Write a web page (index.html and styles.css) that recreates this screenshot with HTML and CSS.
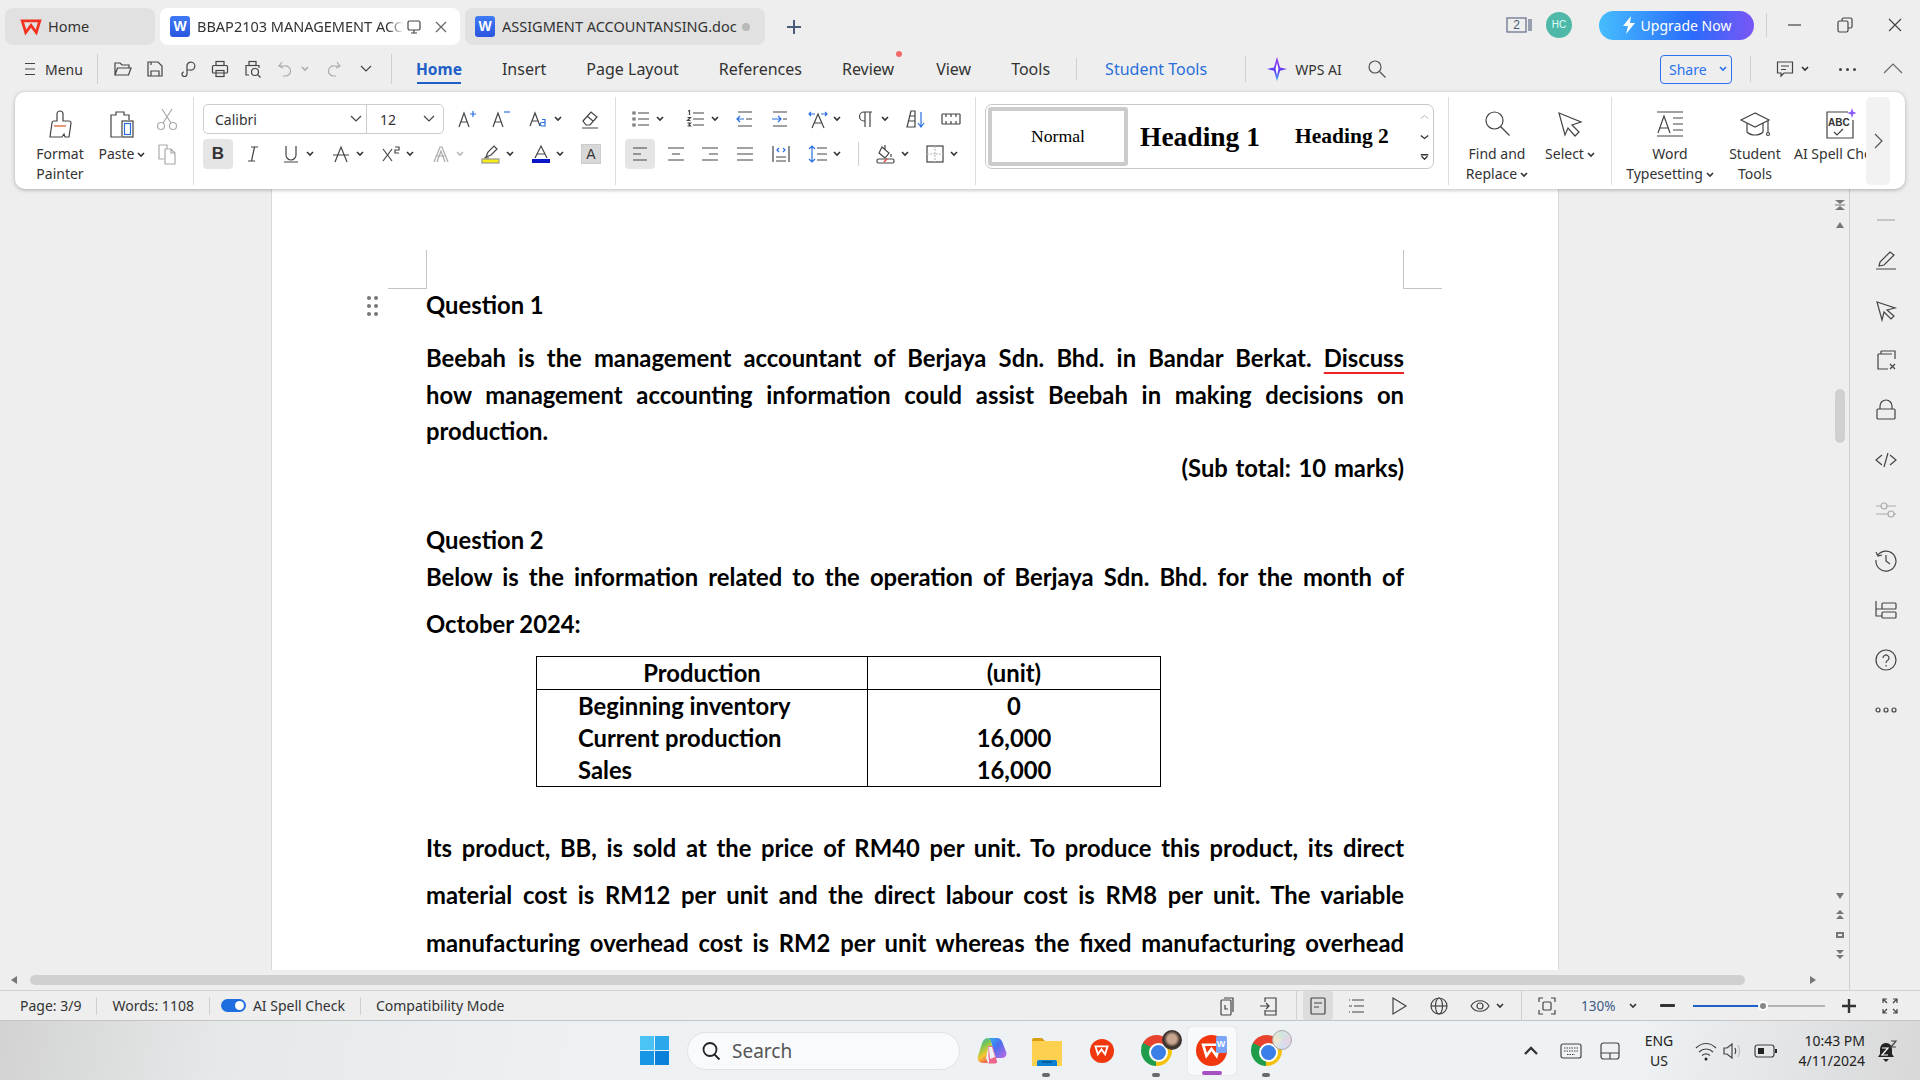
FILE: index.html
```html
<!DOCTYPE html>
<html lang="en">
<head>
<meta charset="utf-8">
<title>WPS Writer</title>
<link rel="stylesheet" href="styles.css">
</head>
<body>
<svg class="defs" aria-hidden="true"><symbol id="car" viewBox="0 0 8 6"><path d="M1 1l3 3 3-3" fill="none" stroke="currentColor" stroke-width="1.6"/></symbol><symbol id="wps" viewBox="0 0 20 20"><path d="M2 4.500h16L14.800 15 10 8.500 5.200 15z" fill="none" stroke="currentColor" stroke-width="2.500" stroke-linejoin="miter"/></symbol></svg>

<header class="tabbar">
  <div class="tab tab-home"><svg class="wlogo" viewBox="0 0 20 20"><use href="#wps"/></svg><span>Home</span></div>
  <div class="tab tab-active"><span class="wordicon">W</span><span class="tabname fade">BBAP2103 MANAGEMENT ACCOUNTING</span>
    <svg class="i16" viewBox="0 0 16 16"><rect x="2" y="2" width="12" height="9" rx="1.500"/><path d="M8 11v3M5 14h6"/></svg>
    <svg class="i16 close" viewBox="0 0 16 16"><path d="M3 3l10 10M13 3L3 13"/></svg></div>
  <div class="tab tab-other"><span class="wordicon">W</span><span class="tabname">ASSIGMENT ACCOUNTANSING.doc</span><span class="tabdot"></span></div>
  <div class="cell w48"><svg class="i20 plus" viewBox="0 0 20 20"><path d="M10 3v14M3 10h14"/></svg></div>
  <div class="top-right">
    <svg class="count" viewBox="0 0 26 16"><rect x="1" y="1" width="19" height="14"/><path d="M23 2v12M25 2v12"/><text x="10.500" y="12" class="count-n">2</text></svg>
    <span class="avatar">HC</span>
    <span class="upgrade"><svg class="bolt" viewBox="0 0 14 18"><path d="M9 0L1 10h5l-2 8 9-11H8z"/></svg>Upgrade Now</span>
    <span class="vsep sep-up"></span>
    <div class="cell w50"><svg class="i20" viewBox="0 0 20 20"><path d="M3 10h13"/></svg></div>
    <div class="cell w50"><svg class="i20" viewBox="0 0 20 20"><rect x="3" y="6" width="10" height="11" rx="1.500"/><path d="M7 6V4.500A1.500 1.500 0 0 1 8.500 3h7A1.500 1.500 0 0 1 17 4.500v7a1.500 1.500 0 0 1-1.500 1.500H13"/></svg></div>
    <div class="cell w50"><svg class="i20" viewBox="0 0 20 20"><path d="M4 4l12 12M16 4L4 16"/></svg></div>
  </div>
</header>

<nav class="menubar">
  <div class="cell w30"><svg class="i16" viewBox="0 0 16 16"><path d="M3 2.500h10M3 8h10M3 13.500h10"/></svg></div>
  <span class="menu-label">Menu</span>
  <span class="vsep sep-menu"></span>
  <div class="cell w32"><svg class="i20" viewBox="0 0 20 20"><path d="M2 16V4h5l2 2h7v3M2 16l2.500-7H18l-2.500 7z"/></svg></div>
  <div class="cell w32"><svg class="i20" viewBox="0 0 20 20"><path d="M3 3h10l4 4v10H3zM6 17v-5h8v5M6 3v3"/></svg></div>
  <div class="cell w33"><svg class="i20" viewBox="0 0 20 20"><path d="M9 11V6a4 4 0 1 1 3 5H9zM9 11v4a2.500 2.500 0 0 1-5 0 2 2 0 0 1 2-2"/></svg></div>
  <div class="cell w32"><svg class="i20" viewBox="0 0 20 20"><rect x="6" y="2.500" width="8" height="4"/><rect x="2.500" y="6.500" width="15" height="7.500" rx="1"/><rect x="6" y="11.500" width="8" height="6"/></svg></div>
  <div class="cell w33"><svg class="i20" viewBox="0 0 20 20"><rect x="6" y="2.500" width="7" height="4"/><path d="M6 16H3V6.500h13V9"/><circle cx="12" cy="13" r="3.500"/><path d="M15 16l2.500 2.500"/></svg></div>
  <div class="cell w32"><svg class="i20 dim" viewBox="0 0 20 20"><path d="M7 3L4 7l4 2M4 7h6a5 5 0 0 1 1 10H8"/></svg></div>
  <div class="cell w8"><svg class="car dimc"><use href="#car"/></svg></div>
  <div class="cell w50"><svg class="i20 dim" viewBox="0 0 20 20"><path d="M13 3l3 4-4 2M16 7h-6a5 5 0 0 0-1 10h3"/></svg></div>
  <div class="cell w14"><svg class="i12" viewBox="0 0 12 8"><path d="M1 1l5 5 5-5"/></svg></div>
  <span class="vsep sep-nav"></span>
  <div class="nav">
    <span class="nav-item nav-active">Home</span>
    <span class="nav-item">Insert</span>
    <span class="nav-item">Page Layout</span>
    <span class="nav-item">References</span>
    <span class="nav-item review">Review<i class="dot"></i></span>
    <span class="nav-item">View</span>
    <span class="nav-item">Tools</span>
    <span class="vsep"></span>
    <span class="nav-item nav-student">Student Tools</span>
    <span class="vsep tall"></span>
  </div>
  <svg class="ai" viewBox="0 0 22 32" preserveAspectRatio="none"><defs><linearGradient id="aig" x1="0" y1="0" x2="0" y2="1"><stop offset="0" stop-color="#a236f2"/><stop offset=".6" stop-color="#5a3cf0"/><stop offset="1" stop-color="#39b3f5"/></linearGradient></defs><path d="M11 1l3 13 7 2-7 2-3 13-3-13-7-2 7-2z" fill="url(#aig)"/><path d="M11 8l1.500 8-1.500 8-1.500-8z" fill="#fff"/></svg>
  <span class="ai-label">WPS AI</span>
  <svg class="i20 search" viewBox="0 0 20 20"><circle cx="8" cy="8" r="6"/><path d="M12.500 12.500l6 6"/></svg>
  <div class="menu-right">
    <span class="share">Share<svg class="car blue"><use href="#car"/></svg></span>
    <span class="vsep sep-share"></span>
    <svg class="i20" viewBox="0 0 20 20"><path d="M2.500 3h15v11H9l-3 3v-3H2.500zM6 7h8M6 10.500h5"/></svg>
    <svg class="car car-comment"><use href="#car"/></svg>
    <span class="dots"><i></i><i></i><i></i></span>
    <svg class="i20 collapse" viewBox="0 0 20 20"><path d="M1 14l9-9 9 9"/></svg>
  </div>
</nav>

<section class="ribbon">
  <div class="group g1">
    <div class="big w70">
      <div class="big-icon"><svg class="i32" viewBox="0 0 32 32"><path d="M13 13V6a3 3 0 0 1 6 0v7h6a2 2 0 0 1 2 2l-2 14H21l-1-3-2 3H6l2-14a2 2 0 0 1 2-2z"/><path d="M10 18h12" class="org"/></svg></div>
      <div class="label">Format<br>Painter</div>
    </div>
    <div class="big w50 paste">
      <div class="big-icon"><svg class="i32" viewBox="0 0 32 32"><path d="M15 29H5V7h5V4h8v3h5v5"/><rect x="16" y="13" width="11" height="16"/><rect x="18.500" y="15.500" width="6" height="11" class="bl"/></svg></div>
      <div class="label">Paste<svg class="car inl"><use href="#car"/></svg></div>
    </div>
    <div class="col-small">
      <svg class="i24 dim" viewBox="0 0 24 24"><circle cx="6" cy="19" r="3.500"/><circle cx="18" cy="19" r="3.500"/><path d="M8 16L17 2M16 16L7 2"/></svg>
      <svg class="i24 dim" viewBox="0 0 24 24"><path d="M4 3h8v4M4 3v14h5M10 7h6l4 4v11H10zM16 7v4h4"/></svg>
    </div>
  </div>

  <div class="group g2">
    <div class="row">
      <div class="combo"><span class="combo-font">Calibri<svg class="i12" viewBox="0 0 12 8"><path d="M1 1l5 5 5-5"/></svg></span><span class="combo-size">12<svg class="i12" viewBox="0 0 12 8"><path d="M1 1l5 5 5-5"/></svg></span></div>
      <div class="tool w34 ml13"><svg class="i20" viewBox="0 0 20 20"><path d="M2 18L7 4l5 14M4 13h6"/><path class="bl" d="M13 5h6M16 2v6"/></svg></div>
      <div class="tool w38"><svg class="i20" viewBox="0 0 20 20"><path d="M2 18L7 4l5 14M4 13h6"/><path class="bl" d="M13 3h6"/></svg></div>
      <div class="tool w51"><svg class="i20" viewBox="0 0 20 20"><path d="M1 17L6 4l5 13M3 12h6"/><path class="bl" d="M13 10.500h3v6.500h-3a1.700 1.700 0 0 1 0-3.500h3"/></svg><svg class="car"><use href="#car"/></svg></div>
      <div class="tool"><svg class="i20" viewBox="0 0 20 20"><path d="M3 12l8-9 6 5-7 8H6zM7 7l6 5M2 19h16"/></svg></div>
    </div>
    <div class="row row2">
      <div class="box mr10 bold-b">B</div>
      <div class="tool w38"><svg class="i20" viewBox="0 0 20 20"><path d="M8 3h7M5 17h7M11.500 3L8.500 17"/></svg></div>
      <div class="tool w50"><svg class="i20" viewBox="0 0 20 20"><path d="M5 2v9a5 5 0 0 0 10 0V2M3 18h14"/></svg><svg class="car"><use href="#car"/></svg></div>
      <div class="tool w50"><svg class="i20" viewBox="0 0 20 20"><path d="M4 18L10 3l6 15M2 11h16"/></svg><svg class="car"><use href="#car"/></svg></div>
      <div class="tool w50"><svg class="i20" viewBox="0 0 20 20"><path d="M2 5l9 12M11 5L2 17M14 3h4v3h-4v3h4"/></svg><svg class="car"><use href="#car"/></svg></div>
      <div class="tool w50"><svg class="i20 dim" viewBox="0 0 20 20"><path d="M3 18L9 3h2l6 15M6 12h8M6 18L10 7l4 11"/></svg><svg class="car dimc"><use href="#car"/></svg></div>
      <div class="tool w50"><svg class="i20" viewBox="0 0 20 20"><path d="M5 13l2-5 6-6 3 3-6 6zM3 14h5"/><rect class="yl" x="1" y="15" width="17" height="4"/></svg><svg class="car"><use href="#car"/></svg></div>
      <div class="tool w50"><svg class="i20" viewBox="0 0 20 20"><path d="M4 14L10 2l6 12M6 10h8"/><rect class="bf" x="1" y="15" width="18" height="4"/></svg><svg class="car"><use href="#car"/></svg></div>
      <div class="charbox">A</div>
    </div>
  </div>

  <div class="group g3">
    <div class="row row-p1">
      <div class="tool w55"><svg class="i20" viewBox="0 0 20 20"><path d="M7 4h11M7 10h11M7 16h11"/><path class="th" d="M2 3h2v2H2zM2 9h2v2H2zM2 15h2v2H2z"/></svg><svg class="car"><use href="#car"/></svg></div>
      <div class="tool w49"><svg class="i20" viewBox="0 0 20 20"><path d="M7 4h11M7 10h11M7 16h11M2 2l1.500-.5V6M1.500 8.500h3l-3 3h3M1.500 14h3l-1.500 1.500 1.500 1.500h-3"/></svg><svg class="car"><use href="#car"/></svg></div>
      <div class="tool w35"><svg class="i20" viewBox="0 0 20 20"><path d="M3 3h14M3 17h14M11 10h6"/><path class="bl" d="M2 10h7M5 7l-3 3 3 3"/></svg></div>
      <div class="tool w38"><svg class="i20" viewBox="0 0 20 20"><path d="M3 3h14M3 17h14M13 10h4"/><path class="bl" d="M2 10h9M8 7l3 3-3 3"/></svg></div>
      <div class="tool w48"><svg class="i20" viewBox="0 0 20 20"><path d="M4 19L10 5l6 14M6 14h8"/><path class="bl" d="M3 3l-2 2 2 2M1 5h6M17 3l2 2-2 2M19 5h-6"/></svg><svg class="car"><use href="#car"/></svg></div>
      <div class="tool w50"><svg class="i20" viewBox="0 0 20 20"><path d="M9 18V3M14 18V3M16 3H8a4.500 4.500 0 0 0 0 9h1"/></svg><svg class="car"><use href="#car"/></svg></div>
      <div class="tool w35"><svg class="i20" viewBox="0 0 20 20"><path d="M1 18L5 2h4v16zM3 7h6M2 12h7"/><path class="bl" d="M15 3v15M12 14l3 4 3-4"/></svg></div>
      <div class="tool"><svg class="i20" viewBox="0 0 20 20"><path d="M1 5v10M19 5v10M1 5h18M1 15h18M5 5v3M10 5v3M15 5v3M5 15v-3M10 15v-3M15 15v-3"/></svg></div>
    </div>
    <div class="row row2">
      <div class="box mr11"><svg class="i20" viewBox="0 0 20 20"><path d="M3 4h14M3 10h8M3 16h14"/></svg></div>
      <div class="tool w34"><svg class="i20" viewBox="0 0 20 20"><path d="M2 4h16M6 10h8M2 16h16"/></svg></div>
      <div class="tool w35"><svg class="i20" viewBox="0 0 20 20"><path d="M2 4h16M9 10h9M2 16h16"/></svg></div>
      <div class="tool w36"><svg class="i20" viewBox="0 0 20 20"><path d="M2 4h16M2 10h16M2 16h16"/></svg></div>
      <div class="tool w37"><svg class="i20" viewBox="0 0 20 20"><path d="M2 2v16M18 2v16M5 13h10M5 17h10"/><path class="bl" d="M8 4L6 6l2 2M12 4l2 2-2 2"/></svg></div>
      <div class="tool w50"><svg class="i20" viewBox="0 0 20 20"><path d="M9 4h10M9 10h10M9 16h10"/><path class="bl" d="M4 2v16M1 5l3-3 3 3M1 15l3 3 3-3"/></svg><svg class="car"><use href="#car"/></svg></div>
      <span class="vsep ribbon-sep"></span>
      <div class="tool w49"><svg class="i20" viewBox="0 0 20 20"><path d="M6 3l7 6-4 5-6-5zM9 1v4M15 10v3"/><rect x="1" y="15" width="17" height="4" rx="1.500"/><path class="rd" d="M8 18l3-3"/></svg><svg class="car"><use href="#car"/></svg></div>
      <div class="tool"><svg class="i20" viewBox="0 0 20 20"><rect x="2" y="2" width="16" height="16"/><path class="dsh" d="M10 2v16M2 10h16"/></svg><svg class="car"><use href="#car"/></svg></div>
    </div>
  </div>

  <div class="group g4">
    <div class="styles">
      <span class="style-normal">Normal</span>
      <span class="style-h1">Heading 1</span>
      <span class="style-h2">Heading 2</span>
      <div class="style-arrows">
        <svg class="i9 dim" viewBox="0 0 12 8"><path d="M1 6l5-4 5 4"/></svg>
        <svg class="i9 dark" viewBox="0 0 12 8"><path d="M1 2l5 4 5-4"/></svg>
        <svg class="i9 dark" viewBox="0 0 12 8"><path d="M1 1h10M2 3l4 4 4-4"/></svg>
      </div>
    </div>
  </div>

  <div class="group g5">
    <div class="big w96">
      <div class="big-icon"><svg class="i32" viewBox="0 0 32 32"><circle cx="13.500" cy="12.500" r="8.500"/><path d="M19.500 18.500l9 9"/></svg></div>
      <div class="label">Find and<br>Replace<svg class="car inl"><use href="#car"/></svg></div>
    </div>
    <div class="big w50">
      <div class="big-icon"><svg class="i32" viewBox="0 0 32 32"><path d="M5 5l22 9-9 3 7 7-4 4-7-8-3 7z"/></svg></div>
      <div class="label">Select<svg class="car inl"><use href="#car"/></svg></div>
    </div>
  </div>

  <div class="group g6">
    <div class="big w116">
      <div class="big-icon"><svg class="i32" viewBox="0 0 32 32"><path d="M3 4h26M3 28h26M4 25l6-17 6 17M6 20h8M19 10h10M19 16h10M19 22h10"/></svg></div>
      <div class="label">Word<br>Typesetting<svg class="car inl"><use href="#car"/></svg></div>
    </div>
    <div class="big w54">
      <div class="big-icon"><svg class="i32" viewBox="0 0 32 32"><path d="M16 5L2 12l14 7 14-7zM8 15v9c4 4 12 4 16 0v-9M29 13v11"/><circle cx="29" cy="26" r="1.500"/></svg></div>
      <div class="label">Student<br>Tools</div>
    </div>
    <div class="big big-ai">
      <div class="big-icon"><svg class="i32" viewBox="0 0 32 32"><path d="M24 4H3v26h26V12"/><path d="M10 24l3 3 6-6"/><text x="4" y="18" class="abc">ABC</text><path class="star" d="M28 0l1.200 3.800L33 5l-3.800 1.200L28 10l-1.200-3.800L23 5l3.800-1.200z"/></svg></div>
      <div class="label nowrap">AI Spell Check</div>
    </div>
  </div>
  <div class="ribbon-next"><svg class="i16" viewBox="0 0 16 16"><path d="M5 1l7 7-7 7"/></svg></div>
</section>

<main class="workspace">
  <div class="workspace-left">
    <div class="doc-row">
      <div class="doc-area">
        <article class="page">
          <span class="corner corner-l"></span>
          <span class="corner corner-r"></span>
          <span class="grip"><i></i><i></i><i></i><i></i><i></i><i></i></span>
          <p class="q">Question 1</p>
          <div class="para">
            <span class="jl">Beebah is the management accountant of Berjaya Sdn. Bhd. in Bandar Berkat. <u>Discuss</u></span>
            <span class="jl">how management accounting information could assist Beebah in making decisions on</span>
            <span class="ll">production.</span>
            <span class="rl">(Sub total: 10 marks)</span>
          </div>
          <div class="para para-q2">
            <span class="ll">Question 2</span>
            <span class="jl">Below is the information related to the operation of Berjaya Sdn. Bhd. for the month of</span>
            <span class="ll tall-line">October 2024:</span>
          </div>
          <table class="data">
            <thead><tr><th>Production</th><th>(unit)</th></tr></thead>
            <tbody>
              <tr><td class="name">Beginning inventory</td><td>0</td></tr>
              <tr><td class="name">Current production</td><td>16,000</td></tr>
              <tr><td class="name">Sales</td><td>16,000</td></tr>
            </tbody>
          </table>
          <div class="para para-wide">
            <span class="jl">Its product, BB, is sold at the price of RM40 per unit. To produce this product, its direct</span>
            <span class="jl">material cost is RM12 per unit and the direct labour cost is RM8 per unit. The variable</span>
            <span class="jl">manufacturing overhead cost is RM2 per unit whereas the fixed manufacturing overhead</span>
          </div>
        </article>
      </div>
      <div class="vscroll">
        <svg class="sc" viewBox="0 0 10 10"><path d="M0 0h10L5 4zM0 10h10L5 6z"/><path d="M0 4.500h10v1H0z"/></svg>
        <svg class="sc sc-up" viewBox="0 0 10 10"><path d="M5 2l4 6H1z"/></svg>
        <div class="v-thumb"></div>
        <div class="v-bottom">
          <svg class="sc" viewBox="0 0 10 10"><path d="M5 8L1 2h8z"/></svg>
          <svg class="sc" viewBox="0 0 10 10"><path d="M5 0l4 4H1zM5 5l4 4H1z"/></svg>
          <svg class="sc" viewBox="0 0 10 10"><path d="M1 2h8v6H1zM3 4v2h4V4z" fill-rule="evenodd"/></svg>
          <svg class="sc" viewBox="0 0 10 10"><path d="M5 5L1 1h8zM5 10L1 6h8z"/></svg>
        </div>
      </div>
    </div>
    <div class="hscroll">
      <svg class="sc" viewBox="0 0 10 10"><path d="M2 5l6-4v8z"/></svg>
      <div class="h-thumb"></div>
      <svg class="sc" viewBox="0 0 10 10"><path d="M8 5L2 1v8z"/></svg>
    </div>
  </div>
  <aside class="sidepanel">
    <svg class="i24 dim first" viewBox="0 0 24 24"><path d="M3 12h18"/></svg>
    <svg class="i24" viewBox="0 0 24 24"><path d="M5 18l1-4L16 4l4 3-10 10zM2 21h20"/></svg>
    <svg class="i24" viewBox="0 0 24 24"><path d="M3 4l18 6-8 2 7 6-3 3-7-7-2 8z"/></svg>
    <svg class="i24" viewBox="0 0 24 24"><path d="M7 3h14v8M4 6h14M4 6v15h10M7 3v3"/><path d="M16 16l5 5M21 16l-5 5"/></svg>
    <svg class="i24" viewBox="0 0 24 24"><rect x="3" y="11" width="18" height="10" rx="1"/><path d="M6 11V8a6 6 0 0 1 12 0v3"/></svg>
    <svg class="i24" viewBox="0 0 24 24"><path d="M8 7l-6 5 6 5M16 7l6 5-6 5M14 5l-4 14"/></svg>
    <svg class="i24 dim" viewBox="0 0 24 24"><path d="M2 8h5M13 8h9M2 16h12M20 16h2"/><circle cx="10" cy="8" r="3"/><circle cx="17" cy="16" r="3"/></svg>
    <svg class="i24" viewBox="0 0 24 24"><path d="M4 7a10 10 0 1 1-2 5M2 4l2 4 4-1M12 7v6l4 3"/></svg>
    <svg class="i24" viewBox="0 0 24 24"><path d="M2 3v15h6M2 11h6"/><rect x="8" y="5" width="14" height="6" rx="1"/><rect x="8" y="14" width="14" height="6" rx="1"/></svg>
    <svg class="i24" viewBox="0 0 24 24"><circle cx="12" cy="12" r="10"/><path d="M9 10a3 3 0 1 1 4.500 2.600c-1 .6-1.500 1-1.500 2.400M12 17v1.500"/></svg>
    <svg class="i24" viewBox="0 0 24 24"><circle cx="4" cy="12" r="2"/><circle cx="12" cy="12" r="2"/><circle cx="20" cy="12" r="2"/></svg>
  </aside>
</main>

<footer class="statusbar">
  <span class="st">Page: 3/9</span><span class="vsep st-sep"></span>
  <span class="st">Words: 1108</span><span class="vsep st-sep"></span>
  <span class="toggle"></span>
  <span class="st">AI Spell Check</span><span class="vsep st-sep"></span>
  <span class="st">Compatibility Mode</span>
  <div class="status-right">
    <div class="cell w42"><svg class="i20" viewBox="0 0 20 20"><path d="M7 2h9v14"/><rect x="4" y="4" width="10" height="15" rx="1"/><path d="M8 9v4h3"/></svg></div>
    <div class="cell w42"><svg class="i20" viewBox="0 0 20 20"><path d="M6 6V2h11v17H6v-5M6 15h11M1 10h9M7 7l3 3-3 3"/></svg></div>
    <div class="cell w13"><span class="vsep"></span></div>
    <div class="cell w30 st-active"><svg class="i20" viewBox="0 0 20 20"><rect x="3" y="2" width="14" height="16" rx="1"/><path d="M6 7h8M6 11h5"/></svg></div>
    <div class="cell w48"><svg class="i20" viewBox="0 0 20 20"><path d="M5 4h12M7 10h10M5 16h12M2 4h1M2 10h3M2 16h1"/></svg></div>
    <div class="cell w36"><svg class="i20" viewBox="0 0 20 20"><path d="M4 2l13 8-13 8z"/></svg></div>
    <div class="cell w44"><svg class="i20" viewBox="0 0 20 20"><circle cx="10" cy="10" r="8"/><ellipse cx="10" cy="10" rx="3.500" ry="8"/><path d="M2 10h16"/></svg></div>
    <div class="cell w52"><svg class="i20" viewBox="0 0 20 20"><path d="M1 10c4-7 14-7 18 0-4 7-14 7-18 0z"/><circle cx="10" cy="10" r="3"/></svg><svg class="car car-eye"><use href="#car"/></svg></div>
    <div class="cell w16"><span class="vsep"></span></div>
    <div class="cell w36"><svg class="i20" viewBox="0 0 20 20"><path d="M2 6V2h4M14 2h4v4M18 14v4h-4M6 18H2v-4"/><rect x="6" y="6" width="8" height="8" rx="1"/></svg></div>
    <span class="zoom-val">130%</span>
    <div class="cell w32"><svg class="car"><use href="#car"/></svg></div>
    <div class="cell w36"><span class="minus"></span></div>
    <div class="slider"><span class="slider-fill"></span><span class="slider-knob"></span></div>
    <div class="cell w48"><svg class="i16 thick" viewBox="0 0 16 16"><path d="M8 1v14M1 8h14"/></svg></div>
    <div class="cell w34"><svg class="i20" viewBox="0 0 20 20"><path d="M7 3H3v4M13 3h4v4M17 13v4h-4M7 17H3v-4M3 3l4 4M17 3l-4 4M17 17l-4-4M3 17l4-4" /></svg></div>
  </div>
</footer>

<footer class="taskbar">
  <div class="win"><i></i><i></i><i></i><i></i></div>
  <div class="searchbox"><svg class="i20 s-ic" viewBox="0 0 20 20"><circle cx="9" cy="8.500" r="6.500"/><path d="M13.500 13.500l5 5"/></svg><span>Search</span></div>
  <div class="tasks">
    <div class="task"><svg class="t30" viewBox="0 0 30 30"><defs><linearGradient id="cp1" x1="0" y1="0" x2="1" y2="1"><stop offset="0" stop-color="#2fb4ea"/><stop offset=".45" stop-color="#4a6ff0"/><stop offset="1" stop-color="#c46ae0"/></linearGradient><linearGradient id="cp2" x1="0" y1="0" x2=".4" y2="1"><stop offset="0" stop-color="#28a8e0"/><stop offset=".4" stop-color="#7cc850"/><stop offset=".75" stop-color="#f7c52f"/><stop offset="1" stop-color="#f07050"/></linearGradient></defs><path d="M11 2h9c3 0 4.500 2 5.500 4.500l3.500 9c1.500 4-1 6.500-4.500 6.500H19l-3.500-11C14.500 8 14 4 11 2z" fill="url(#cp1)"/><path d="M11 2c3 1 3.500 5 4 8h-3.500L9 22 11 27H6c-4 0-6-3-5-7L4.500 9C5.500 5 7.500 2 11 2z" fill="url(#cp2)"/><path d="M11.500 10h4l3.500 12c.8 3 2.500 5-1 5.500H11c2-1 1-3 .5-6z" fill="#f0638a"/><path d="M12 11h3l3 10-5 2z" fill="#eef2f6"/></svg></div>
    <div class="task"><svg class="t30" viewBox="0 0 30 30"><path d="M0 4a2 2 0 0 1 2-2h8l3 3v5H0z" fill="#d99e10"/><rect y="5" width="30" height="25" fill="#fdd04f"/><path d="M5 26a2 2 0 0 1 2-2h16a2 2 0 0 1 2 2v4H5z" fill="#0a80d4"/><path d="M10 26h10" stroke="#064f8a" stroke-width="1.500"/></svg><b class="pip"></b></div>
    <div class="task"><span class="wpsdot small"><svg viewBox="0 0 20 20"><use href="#wps"/></svg></span></div>
    <div class="task"><span class="chrome"></span><span class="badge-photo"></span><b class="pip"></b></div>
    <div class="task"><div class="tile"><span class="wpsdot"><svg viewBox="0 0 20 20"><use href="#wps"/></svg></span><span class="wbadge">W</span><b class="pip-long"></b></div></div>
    <div class="task"><span class="chrome"></span><span class="badge-opal"></span><b class="pip"></b></div>
  </div>
  <div class="tray">
    <div class="cell w40"><svg class="i16 thick" viewBox="0 0 16 16"><path d="M2 11l6-6 6 6"/></svg></div>
    <div class="cell w40"><svg class="i24" viewBox="0 0 24 24"><rect x="2" y="5" width="20" height="14" rx="2"/><path class="dsh2" d="M5 9h14M5 12h14M8 15.500h8"/></svg></div>
    <div class="cell w38"><svg class="i24" viewBox="0 0 24 24"><rect x="3" y="4" width="18" height="16" rx="2.500"/><path d="M3 14h18M12 14v6"/></svg></div>
    <div class="lang w60"><span>ENG</span><span>US</span></div>
    <div class="cell w34"><svg class="i24" viewBox="0 0 24 24"><path d="M2 9c6-6 14-6 20 0M5 13c4-4 10-4 14 0M8 16.500c2.500-2 5.500-2 8 0"/><circle class="fl" cx="12" cy="20" r="1.500"/></svg></div>
    <div class="cell w20"><svg class="i20" viewBox="0 0 20 20"><path d="M1 7v6h3l5 4V3L4 7zM12 7c1 2 1 4 0 6"/><path class="dim2" d="M15 4c2 4 2 8 0 12"/></svg></div>
    <div class="cell w46"><svg class="i24" viewBox="0 0 24 24"><rect x="1" y="6" width="19" height="12" rx="2.500"/><rect class="fl" x="4" y="9" width="6" height="6"/><path class="fl" d="M21 10h2v4h-2z"/></svg></div>
    <div class="clock w76"><span>10:43 PM</span><span>4/11/2024</span></div>
    <div class="cell w42"><svg class="i24" viewBox="0 0 24 24"><path class="fl" d="M12 4c-4 0-6 3-6 7v4l-2 3h16l-2-3v-4c0-4-2-7-6-7zM9 20h6l-3 3z"/><path class="wh" d="M8 9h6l-6 7h6"/><path d="M17 2h5l-5 6h5"/></svg></div>
  </div>
</footer>
</body>
</html>
```
FILE: styles.css
```css
* { box-sizing: border-box; }
html, body { margin: 0; padding: 0; }
body {
  width: 1920px; height: 1080px; overflow: hidden;
  background: #eeeeee; color: #333;
  font-family: "Noto Sans", "Open Sans", sans-serif;
  display: flex; flex-direction: column;
}
.defs { position: absolute; width: 0; height: 0; }
svg { flex: none; display: block; fill: none; stroke: #444; stroke-width: 1.2; }
.i9 { width: 9px; height: 6px; }
.i12 { width: 12px; height: 8px; }
.i16 { width: 16px; height: 16px; }
.i20 { width: 20px; height: 20px; }
.i24 { width: 24px; height: 24px; }
.i32 { width: 32px; height: 32px; }
.car { width: 8px; height: 6px; stroke: none; color: #333; }
.car.inl { display: inline-block; margin-left: 3px; vertical-align: middle; }
.car.blue { margin-left: 12px; color: #2a72f0; }
.dim { stroke: #aaa; }
.dimc { opacity: .35; }
.dark { stroke: #333; stroke-width: 1.8; }
.bl { stroke: #2a6fe0; }
.org { stroke: #d9541e; }
.yl { fill: #f7ec12; stroke: #999; }
.bf { fill: #0a16c8; stroke: none; }
.rd { stroke: #e33; }
.th { stroke: #666; }
.dsh { stroke: #bbb; stroke-dasharray: 2 1; }
.dsh2 { stroke-dasharray: 1.500 1; }
.dim2 { stroke: #bbb; }
.fl { fill: #222; stroke: none; }
.wh { stroke: #fff; }
.thick { stroke: #333; stroke-width: 2.400; }
.plus { stroke: #4a5a7a; stroke-width: 2; }

.cell { display: flex; align-items: center; justify-content: center; flex: none; height: 100%; }
.w8{width:8px}.w13{width:13px}.w14{width:14px}.w16{width:16px}.w20{width:20px}.w30{width:30px}.w32{width:32px}.w33{width:33px}.w34{width:34px}.w35{width:35px}.w36{width:36px}.w37{width:37px}.w38{width:38px}.w40{width:40px}.w42{width:42px}.w44{width:44px}.w46{width:46px}.w48{width:48px}.w49{width:49px}.w50{width:50px}.w51{width:51px}.w52{width:52px}.w54{width:54px}.w55{width:55px}.w58{width:58px}.w60{width:60px}.w70{width:70px}.w76{width:76px}.w96{width:96px}.w116{width:116px}
.vsep { display: block; flex: none; width: 1px; height: 30px; background: #d0d0d0; }

/* Tab bar */
.tabbar { flex: none; height: 52px; padding: 8px 0 7px 5px; display: flex; align-items: center; gap: 5px; }
.tab { flex: none; height: 37px; border-radius: 8px; display: flex; align-items: center; font-size: 14.500px; line-height: 35px; color: #333; }
.tab-home { width: 150px; background: #e1e1e1; padding-left: 15px; gap: 6px; }
.wlogo { width: 22px; height: 22px; color: #f0321e; stroke: none; }
.tab-active { width: 300px; background: #fff; padding-left: 10px; }
.tab-other { width: 300px; background: #e1e1e1; padding-left: 10px; }
.wordicon { flex: none; width: 20px; height: 21px; border-radius: 3px; background: linear-gradient(#3f7bf6, #2a55e0); color: #fff; font: 700 14px/21px "Liberation Sans", sans-serif; text-align: center; margin-right: 7px; }
.tabname { white-space: nowrap; overflow: hidden; }
.fade { width: 207px; -webkit-mask-image: linear-gradient(90deg, #000 92%, transparent); mask-image: linear-gradient(90deg, #000 92%, transparent); margin-right: 2px; }
.close { margin-left: 11px; stroke: #666; }
.tabdot { width: 8px; height: 8px; border-radius: 50%; background: #b9b9b9; margin-left: 5px; }
.top-right { margin-left: auto; display: flex; align-items: center; height: 37px; margin-top: -3px; }
.count { width: 26px; height: 16px; stroke: #6a7690; stroke-width: 1.300; }
.count-n { font: 12px "Liberation Sans", sans-serif; fill: #4a5a7a; stroke: none; text-anchor: middle; }
.avatar { width: 26px; height: 26px; margin-left: 14px; border-radius: 50%; background: #4fb8a8; color: #dff; font: 10px/26px "Liberation Sans", sans-serif; text-align: center; }
.upgrade { margin-left: 27px; width: 155px; height: 29px; border-radius: 15px; background: linear-gradient(90deg, #45bdfd, #2a6cfb 60%, #7a56f5); color: #fff; font-size: 14px; display: flex; align-items: center; justify-content: center; gap: 5px; }
.bolt { width: 14px; height: 18px; fill: #fff; stroke: none; }
.sep-up { margin-left: 12px; margin-right: 3px; height: 24px; }

/* Menu row */
.menubar { flex: none; height: 40px; padding: 0 0 6px 15px; display: flex; align-items: center; }
.menu-label { font-size: 14px; color: #333; width: 37px; }
.sep-menu { margin: 0 9px 0 15px; }
.sep-nav { margin-left: 18px; }
.nav { display: flex; align-items: center; height: 100%; gap: 40px; margin-left: 24px; }
.nav-item { font-size: 16px; color: #333; position: relative; white-space: nowrap; line-height: 34px; }
.nav-active { color: #1f5fc8; font-weight: 700; font-size: 15.500px; }
.nav-active::after { content: ""; position: absolute; left: 1px; right: 1px; bottom: 2px; height: 2px; background: #1f5fc8; }
.nav-student { color: #2a6fdb; margin-left: -12px; }
.review { margin-right: 2px; }
.nav .vsep { margin-left: -14px; height: 22px; }
.nav .tall { margin-left: -2px; height: 26px; }
.dot { position: absolute; width: 6px; height: 6px; border-radius: 50%; background: #f26a6a; right: -8px; top: -1px; }
.ai { width: 22px; height: 26px; margin-left: 20px; stroke: none; }
.ai-label { font-size: 14px; margin-left: 7px; }
.search { margin-left: 25px; stroke: #555; }
.menu-right { margin-left: auto; display: flex; align-items: center; padding-right: 17px; }
.share { width: 72px; height: 29px; border: 1px solid #2a72f0; border-radius: 4px; color: #2a72f0; font-size: 14px; display: flex; align-items: center; padding-left: 8px; }
.sep-share { margin: 0 24px 0 18px; height: 26px; }
.car-comment { margin-left: 6px; }
.dots { display: flex; gap: 4px; margin-left: 30px; }
.dots i { width: 3px; height: 3px; border-radius: 50%; background: #444; }
.collapse { margin-left: 27px; stroke: #666; }

/* Ribbon */
.ribbon { flex: none; position: relative; z-index: 2; margin: 0 15px; height: 97px; padding-top: 5px; background: #fff; border-radius: 10px; box-shadow: 0 1px 4px rgba(0,0,0,.28); display: flex; align-items: flex-start; }
.group { flex: none; height: 88px; border-right: 1px solid #ddd; padding-top: 7px; display: flex; }
.g1 { width: 179px; padding-left: 10px; }
.g2 { width: 422px; padding-left: 9px; display: block; }
.g3 { width: 360px; padding-left: 9px; display: block; }
.g4 { width: 473px; padding-left: 9px; }
.g5 { width: 163px; }
.g6 { flex: 1; min-width: 0; border: 0; overflow: hidden; }
.big { flex: none; display: flex; flex-direction: column; align-items: center; }
.big-icon { height: 40px; display: flex; align-items: center; justify-content: center; }
.label { font-size: 14px; line-height: 20px; text-align: center; color: #333; white-space: nowrap; }
.big-ai { width: 94px; margin-left: 11px; }
.paste { margin: 0 5px 0 2px; }
.col-small { display: flex; flex-direction: column; gap: 11px; width: 30px; align-items: center; padding-top: 3px; }
.abc { font: 700 10px "Liberation Sans", sans-serif; fill: #333; stroke: none; }
.star { fill: #8a5cf6; stroke: none; }
.row { display: flex; align-items: center; height: 30px; }
.row2 { margin-top: 5px; }
.row-p1 { margin-left: 6px; }
.tool { flex: none; display: flex; align-items: center; gap: 5px; height: 30px; }
.ml13 { margin-left: 13px; }
.mr10 { margin-right: 10px; }
.mr11 { margin-right: 11px; }
.box { flex: none; width: 30px; height: 30px; border-radius: 4px; background: #e5e5e5; display: flex; align-items: center; justify-content: center; }
.bold-b { font: 700 17px "Liberation Sans", sans-serif; color: #333; }
.combo { flex: none; width: 241px; height: 30px; border: 1px solid #ccc; border-radius: 5px; display: flex; font-size: 14px; }
.combo-font { width: 163px; padding: 0 4px 0 11px; border-right: 1px solid #ccc; display: flex; align-items: center; justify-content: space-between; }
.combo-size { flex: 1; padding: 0 8px 0 13px; display: flex; align-items: center; justify-content: space-between; }
.charbox { width: 20px; height: 20px; background: #d8d8d8; border: 1px solid #ccc; font: 14px/18px "Liberation Sans", sans-serif; text-align: center; }
.ribbon-sep { height: 24px; margin-right: 17px; }
.styles { width: 449px; height: 65px; border: 1px solid #c8c8c8; border-radius: 7px; display: flex; align-items: center; padding-left: 2px; font-family: "Liberation Serif", serif; color: #000; }
.style-normal { width: 140px; height: 59px; border: 4px solid #ccc; border-radius: 3px; font-size: 17.700px; display: flex; align-items: center; justify-content: center; }
.style-h1 { font-size: 27.500px; font-weight: 700; margin-left: 12px; width: 120px; white-space: nowrap; }
.style-h2 { font-size: 21.500px; font-weight: 700; margin-left: 35px; width: 95px; white-space: nowrap; }
.style-arrows { margin-left: 30px; display: flex; flex-direction: column; gap: 14px; }
.ribbon-next { flex: none; width: 24px; height: 88px; margin-right: 15px; background: #f2f2f2; border-radius: 5px; display: flex; align-items: center; justify-content: center; }
.ribbon-next svg { stroke: #555; }

/* Workspace */
.workspace { flex: 1; min-height: 0; display: flex; }
.workspace-left { width: 1849px; display: flex; flex-direction: column; }
.doc-row { flex: 1; min-height: 0; display: flex; }
.doc-area { width: 1830px; overflow: hidden; display: flex; justify-content: center; }
.page { position: relative; width: 1288px; height: 781px; flex: none; background: #fff; border-left: 1px solid #d8d8d8; border-right: 1px solid #d8d8d8; padding: 98px 0 0 154px; overflow: hidden; font-family: Lato, "Open Sans", sans-serif; font-weight: 700; font-size: 23.800px; color: #000; }
.page p { margin: 0; }
.q { line-height: 36px; }
.corner { position: absolute; top: 61px; width: 39px; height: 39px; }
.corner-l { left: 116px; border-right: 1px solid #c4c4c4; border-bottom: 1px solid #c4c4c4; }
.corner-r { left: 1131px; border-left: 1px solid #c4c4c4; border-bottom: 1px solid #c4c4c4; }
.grip { position: absolute; left: 95px; top: 107px; width: 11px; display: grid; grid-template-columns: 4px 4px; gap: 4px 3px; }
.grip i { width: 4px; height: 4px; border-radius: 50%; background: #777; }
.para { width: 978px; margin-top: 17px; line-height: 36.500px; }
.para-q2 { margin-top: 36px; }
.para-wide { margin-top: 38px; line-height: 47.300px; }
.jl, .ll, .rl { display: block; }
.jl { text-align: justify; text-align-last: justify; }
.rl { text-align: right; word-spacing: 2px; }
.tall-line { line-height: 58px; }
u { text-decoration: underline; text-decoration-color: #e22; text-decoration-thickness: 2px; text-underline-offset: 5px; }
.data { margin: 3px 0 0 110px; width: 625px; border-collapse: collapse; border: 1px solid #000; table-layout: fixed; line-height: 28px; }
.data th, .data td { padding: 0; text-align: center; border-left: 1px solid #000; }
.data th:first-child { width: 331px; }
.data th { height: 33px; border-bottom: 1px solid #000; font-weight: 700; }
.data td { height: 32px; font-weight: 700; }
.data tr:last-child td { height: 33px; }
.data td.name { text-align: left; padding-left: 41px; }

.vscroll { width: 19px; padding: 11px 0 11px 5px; display: flex; flex-direction: column; }
.sc { width: 10px; height: 10px; fill: #777; stroke: none; }
.sc-up { margin-top: 10px; }
.v-thumb { width: 10px; height: 54px; margin-top: 159px; background: #d0d0d0; border-radius: 5px; }
.v-bottom { margin-top: auto; display: flex; flex-direction: column; gap: 9.500px; }
.hscroll { flex: none; height: 20px; display: flex; align-items: center; padding-left: 9px; }
.h-thumb { width: 1715px; height: 10px; margin: 0 63px 0 11px; background: #d0d0d0; border-radius: 5px; }
.sidepanel { width: 71px; border-left: 1px solid #cfcfcf; padding: 19px 0 0 24px; display: flex; flex-direction: column; gap: 26px; }
.sidepanel .first { margin-bottom: -10px; }

/* Status bar */
.statusbar { flex: none; height: 31px; border-top: 1px solid #d2d2d2; border-bottom: 1px solid #c4c4c4; padding-left: 20px; display: flex; align-items: center; font-size: 14px; color: #333; }
.st { white-space: nowrap; }
.st-sep { height: 18px; margin: 0 15px; }
.toggle { position: relative; width: 25px; height: 13px; border-radius: 7px; background: #1f6ee0; margin: 0 7px 0 -4px; }
.toggle::after { content: ""; position: absolute; right: 2px; top: 2px; width: 9px; height: 9px; border-radius: 50%; background: #fff; }
.status-right { margin-left: auto; display: flex; align-items: center; height: 100%; padding-right: 13px; }
.st-active { background: #dcdcdc; border-radius: 3px; }
.car-eye { margin-left: 6px; }
.zoom-val { width: 36px; margin-left: 16px; color: #3b5c8a; font-size: 13.500px; }
.minus { width: 15px; height: 3px; background: #333; border-radius: 1px; }
.slider { position: relative; width: 132px; height: 2px; margin-left: 8px; background: #b4b4b4; }
.slider-fill { position: absolute; left: 0; top: 0; width: 68px; height: 2px; background: #1f5fc8; }
.slider-knob { position: absolute; left: 65px; top: -4px; width: 10px; height: 10px; border-radius: 50%; background: #888; border: 2px solid #fff; }

/* Taskbar */
.taskbar { flex: none; height: 59px; padding-left: 640px; display: flex; align-items: center; background: linear-gradient(100deg, #d2d2d2 0, #e6e9ea 12%, #edf1f4 30%, #eef2f5 85%, #d8d8d8 100%); }
.win { flex: none; width: 29px; height: 29px; display: grid; grid-template-columns: 1fr 1fr; gap: 1px; }
.win i:nth-child(1) { background: #4cc3f5; }
.win i:nth-child(2) { background: #2ba8ec; }
.win i:nth-child(3) { background: #1796e4; }
.win i:nth-child(4) { background: #0a80d8; }
.searchbox { flex: none; width: 273px; height: 38px; margin-left: 18px; border-radius: 19px; background: #f8fafc; border: 1px solid #dfe3e6; display: flex; align-items: center; padding-left: 13px; gap: 11px; font-size: 19px; color: #555; }
.s-ic { stroke: #222; stroke-width: 1.800; }
.tasks { display: flex; align-items: center; height: 100%; margin-left: 4px; }
.task { position: relative; width: 55px; height: 100%; display: flex; align-items: center; justify-content: center; }
.t30 { width: 30px; height: 30px; stroke: none; }
.pip { position: absolute; left: 23px; bottom: 3px; width: 8px; height: 4px; border-radius: 2px; background: #6a6a6a; }
.wpsdot { width: 31px; height: 31px; border-radius: 50%; background: #f0370e; color: #fff; display: flex; align-items: center; justify-content: center; }
.wpsdot svg { width: 21px; height: 21px; stroke: none; }
.wpsdot.small { width: 24px; height: 24px; }
.wpsdot.small svg { width: 15px; height: 15px; }
.chrome { position: relative; width: 31px; height: 31px; border-radius: 50%; background: conic-gradient(from 60deg, #f4c20d 0 120deg, #1f9d4d 120deg 240deg, #e8432e 240deg 360deg); }
.chrome::after { content: ""; position: absolute; left: 8px; top: 8px; width: 15px; height: 15px; border-radius: 50%; background: #3b7fe8; border: 2px solid #fff; }
.badge-photo, .badge-opal { position: absolute; left: 33px; top: 9px; width: 20px; height: 20px; border-radius: 50%; }
.badge-photo { background: radial-gradient(circle at 50% 45%, #c9a690 0 30%, #3a2e2a 55%, #6d6258 100%); }
.badge-opal { background: conic-gradient(#cfe6de, #e6d4e4, #d4dfee, #f0e6cf, #cfe6de); border: 1px solid #aaa; }
.tile { position: relative; width: 48px; height: 48px; border-radius: 4px; background: #f7f9fb; box-shadow: 0 0 1px #bbb; display: flex; align-items: center; justify-content: center; }
.wbadge { position: absolute; right: 9px; top: 9px; width: 11px; height: 17px; border-radius: 2px; background: #7aa6f5; color: #fff; font: 700 9px/17px "Liberation Sans", sans-serif; text-align: center; }
.pip-long { position: absolute; left: 14px; bottom: 0; width: 20px; height: 4px; border-radius: 2px; background: #a750c2; }
.tray { margin-left: auto; display: flex; align-items: center; height: 100%; padding-right: 13px; }
.lang, .clock { display: flex; flex-direction: column; font-size: 14px; line-height: 20px; color: #222; white-space: nowrap; }
.lang { align-items: center; }
.clock { align-items: flex-end; }
```
